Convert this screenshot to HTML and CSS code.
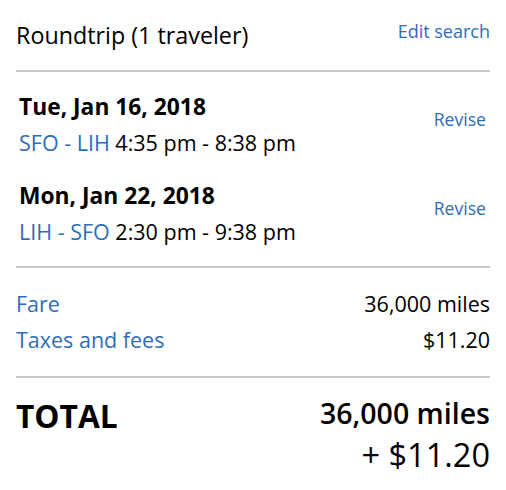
FILE: index.html
```html
<!DOCTYPE html>
<html>
<head>
<meta charset="utf-8">
<link rel="stylesheet" href="styles.css">
</head>
<body>
<div class="summary">
  <div class="head">
    <div class="title">Roundtrip (1 traveler)</div>
    <a class="link edit">Edit search</a>
  </div>
  <div class="flights">
    <div class="flight">
      <div class="info">
        <div class="date">Tue, Jan 16, 2018</div>
        <div class="route"><span class="blue">SFO - LIH</span> 4:35 pm - 8:38 pm</div>
      </div>
      <a class="link revise">Revise</a>
    </div>
    <div class="flight">
      <div class="info">
        <div class="date">Mon, Jan 22, 2018</div>
        <div class="route"><span class="blue">LIH - SFO</span> 2:30 pm - 9:38 pm</div>
      </div>
      <a class="link revise">Revise</a>
    </div>
  </div>
  <div class="costs">
    <div class="row"><span class="blue">Fare</span><span>36,000 miles</span></div>
    <div class="row"><span class="blue">Taxes and fees</span><span>$11.20</span></div>
  </div>
  <div class="total">
    <div class="total-label">TOTAL</div>
    <div class="total-value">
      <div class="miles">36,000 miles</div>
      <div class="cash">+ $11.20</div>
    </div>
  </div>
</div>
</body>
</html>
```
FILE: styles.css
```css
* { box-sizing: border-box; }
body {
  margin: 0;
  background: #fff;
  font-family: "Open Sans", sans-serif;
  color: #000;
}
.summary {
  padding: 0 16px;
}
.blue { color: #2e6db5; }
.link { color: #2e6db5; }
.head {
  display: flex;
  justify-content: space-between;
  align-items: flex-start;
  padding-top: 19px;
  height: 72px;
  border-bottom: 2px solid #cbcbcb;
}
.title { font-size: 23.3px; line-height: 32px; }
.edit { font-size: 18px; line-height: 24px; }
.flights {
  padding: 20px 4px 17px 3px;
  border-bottom: 2px solid #cbcbcb;
}
.flight {
  display: flex;
  justify-content: space-between;
  align-items: flex-start;
  margin-bottom: 21px;
}
.flight:last-child { margin-bottom: 0; }
.date { font-weight: 700; font-size: 22.8px; line-height: 30px; }
.route { font-size: 21.5px; line-height: 34px; margin-top: 4px; }
.revise { font-size: 17.6px; line-height: 24px; margin-top: 15px; }
.costs {
  padding: 18px 0 18px;
  border-bottom: 2px solid #cbcbcb;
}
.row {
  display: flex;
  justify-content: space-between;
  font-size: 21.5px;
  line-height: 36px;
}
.total {
  display: flex;
  justify-content: space-between;
  padding-top: 18px;
}
.total-label { font-weight: 700; font-size: 31.7px; line-height: 40px; }
.total-value { text-align: right; }
.miles { font-weight: 600; font-size: 28.5px; line-height: 34px; }
.cash { font-size: 32.5px; line-height: 50px; }
```
